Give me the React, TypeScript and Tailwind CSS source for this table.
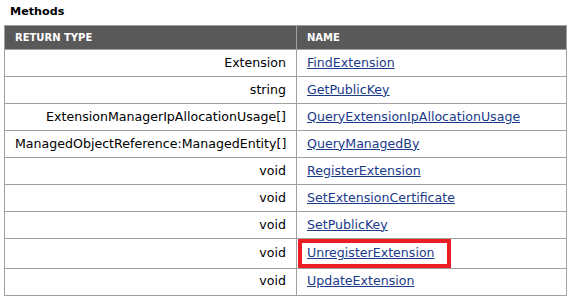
import React from "react";

const methods: [string, string][] = [
  ["Extension", "FindExtension"],
  ["string", "GetPublicKey"],
  ["ExtensionManagerIpAllocationUsage[]", "QueryExtensionIpAllocationUsage"],
  ["ManagedObjectReference:ManagedEntity[]", "QueryManagedBy"],
  ["void", "RegisterExtension"],
  ["void", "SetExtensionCertificate"],
  ["void", "SetPublicKey"],
  ["void", "UnregisterExtension"],
  ["void", "UpdateExtension"],
];

export default function App() {
  return (
    <div className="w-[570px] h-[298px] bg-white pl-[4px] pt-[4px] font-['DejaVu_Sans',Verdana,sans-serif] text-black">
      <h3 className="pl-[6px] text-[11.2px] font-bold leading-[16px] h-[21px]">Methods</h3>

      <table className="w-[563px] border-collapse table-fixed">
        <colgroup>
          <col className="w-[292px]" />
          <col />
        </colgroup>
        <thead>
          <tr className="bg-[#595959] h-[24px]">
            <th className="border border-[#a0a0a0] px-[10px] text-left text-[10px] font-bold text-white uppercase">
              Return Type
            </th>
            <th className="border border-[#a0a0a0] px-[10px] text-left text-[10px] font-bold text-white uppercase">
              Name
            </th>
          </tr>
        </thead>
        <tbody>
          {methods.map(([type, name]) => (
            <tr key={name} className="h-[27px] text-[12.6px]">
              <td className="border border-[#a0a0a0] px-[10px] text-right whitespace-nowrap">{type}</td>
              <td className="border border-[#a0a0a0] px-[10px] whitespace-nowrap">
                {name === "UnregisterExtension" ? (
                  <span className="inline-block -ml-[9px] pl-[5px] pr-[12px] py-[1px] border-[4px] border-[#ec1c24]">
                    <a href="#" className="text-[#1a3a8a] underline">{name}</a>
                  </span>
                ) : (
                  <a href="#" className="text-[#1a3a8a] underline">{name}</a>
                )}
              </td>
            </tr>
          ))}
        </tbody>
      </table>
    </div>
  );
}
